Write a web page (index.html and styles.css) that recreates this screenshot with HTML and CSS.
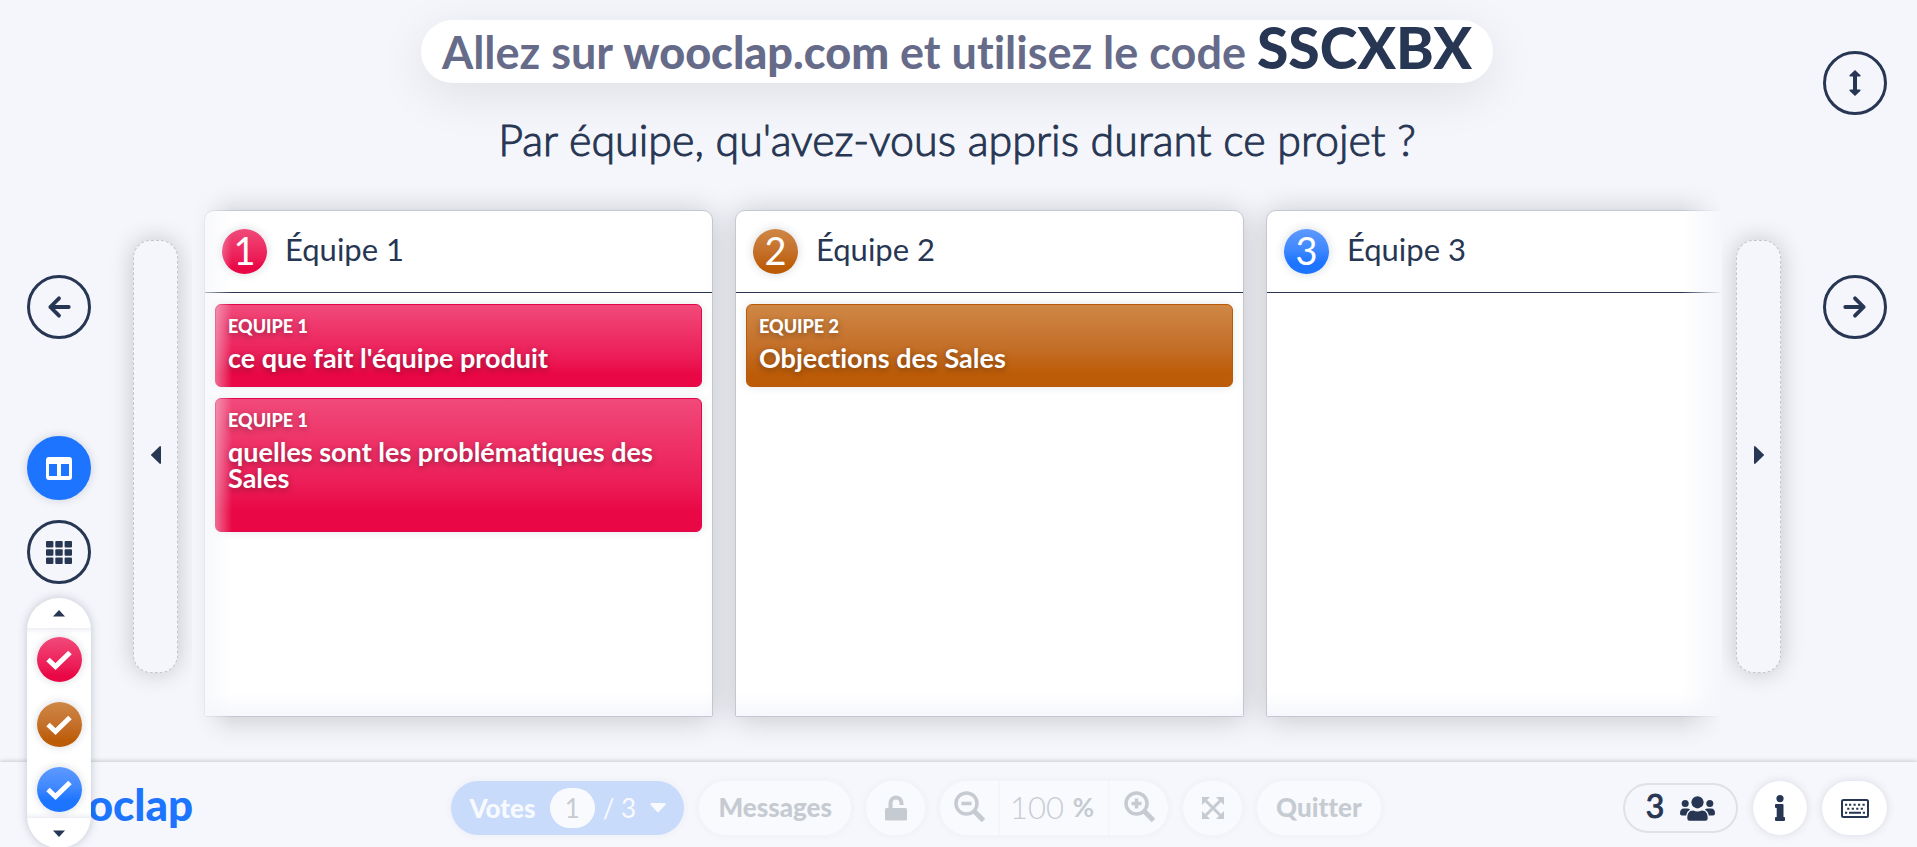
FILE: index.html
```html
<!DOCTYPE html>
<html lang="fr">
<head>
<meta charset="utf-8">
<title>Wooclap</title>
<link rel="stylesheet" href="styles.css">
</head>
<body>
<main class="stage">
  <nav class="rail rail-left">
    <button class="round" aria-label="Question précédente"><svg viewBox="0 0 24 24" class="ico-arrow"><path d="M21 12H4M12 4l-8 8 8 8"/></svg></button>
    <div class="views">
      <button class="round round-active" aria-label="Vue en colonnes"><svg viewBox="0 0 26 23" class="ico-fill ico-view"><path fill-rule="evenodd" d="M3 0h20a3 3 0 0 1 3 3v17a3 3 0 0 1-3 3H3a3 3 0 0 1-3-3V3a3 3 0 0 1 3-3zM3 7v12h8V7zM15 7v12h8V7z"/></svg></button>
      <button class="round" aria-label="Vue en grille"><svg viewBox="0 0 26 23" class="ico-fill ico-view"><rect width="7.400" height="6.600" rx="1"/><rect x="9.300" width="7.400" height="6.600" rx="1"/><rect x="18.600" width="7.400" height="6.600" rx="1"/><rect y="8.200" width="7.400" height="6.600" rx="1"/><rect x="9.300" y="8.200" width="7.400" height="6.600" rx="1"/><rect x="18.600" y="8.200" width="7.400" height="6.600" rx="1"/><rect y="16.400" width="7.400" height="6.600" rx="1"/><rect x="9.300" y="16.400" width="7.400" height="6.600" rx="1"/><rect x="18.600" y="16.400" width="7.400" height="6.600" rx="1"/></svg></button>
    </div>
    <div class="filter">
      <button class="filter-step" aria-label="Monter"><svg viewBox="0 0 12 7" class="ico-caret"><path d="M6 0l6 6.500H0z"/></svg></button>
      <div class="filter-list">
        <label class="check red"><input type="checkbox" checked aria-label="Équipe 1"><svg viewBox="0 0 26 20"><path d="M2 9.500l7.500 7L24 2.500"/></svg></label>
        <label class="check brown"><input type="checkbox" checked aria-label="Équipe 2"><svg viewBox="0 0 26 20"><path d="M2 9.500l7.500 7L24 2.500"/></svg></label>
        <label class="check blue"><input type="checkbox" checked aria-label="Équipe 3"><svg viewBox="0 0 26 20"><path d="M2 9.500l7.500 7L24 2.500"/></svg></label>
      </div>
      <button class="filter-step" aria-label="Descendre"><svg viewBox="0 0 12 7" class="ico-caret"><path d="M6 7l6-6.500H0z"/></svg></button>
    </div>
  </nav>

  <div class="center">
    <p class="join">Allez sur <b>wooclap.com</b> et utilisez le code <strong>SSCXBX</strong></p>
    <h1 class="question">Par équipe, qu'avez-vous appris durant ce projet ?</h1>
    <div class="board-row">
      <button class="scroller" aria-label="Colonnes précédentes"><svg viewBox="0 0 10 18"><path d="M10 1v16a1 1 0 0 1-1 1L.5 9.800a1 1 0 0 1 0-1.600L9 0a1 1 0 0 1 1 1z"/></svg></button>
      <div class="board">
        <section class="column">
          <header class="column-head"><span class="badge red">1</span><h2>Équipe 1</h2></header>
          <div class="column-body">
            <article class="answer red"><h3>EQUIPE 1</h3><p>ce que fait l'équipe produit</p></article>
            <article class="answer answer-tall red"><h3>EQUIPE 1</h3><p>quelles sont les problématiques des Sales</p></article>
          </div>
        </section>
        <section class="column">
          <header class="column-head"><span class="badge brown">2</span><h2>Équipe 2</h2></header>
          <div class="column-body">
            <article class="answer brown"><h3>EQUIPE 2</h3><p>Objections des Sales</p></article>
          </div>
        </section>
        <section class="column">
          <header class="column-head"><span class="badge blue">3</span><h2>Équipe 3</h2></header>
          <div class="column-body"></div>
        </section>
      </div>
      <button class="scroller" aria-label="Colonnes suivantes"><svg viewBox="0 0 10 18"><path d="M0 1v16a1 1 0 0 0 1 1l8.500-8.200a1 1 0 0 0 0-1.600L1 0a1 1 0 0 0-1 1z"/></svg></button>
    </div>
  </div>

  <nav class="rail rail-right">
    <button class="round" aria-label="Ajuster la hauteur"><svg viewBox="0 0 12 26" class="ico-fill ico-height"><path d="M6 0l5.500 5.200q.5 1.300-1 1.300H8v13h2.500q1.500 0 1 1.300L6 26 .5 20.800Q0 19.500 1.500 19.500H4v-13H1.500Q0 6.500.5 5.200z"/></svg></button>
    <button class="round" aria-label="Question suivante"><svg viewBox="0 0 24 24" class="ico-arrow"><path d="M3 12h17M12 4l8 8-8 8"/></svg></button>
  </nav>
</main>

<footer class="footer">
  <a class="logo" href="#">wooclap</a>
  <div class="tools">
    <div class="votes">
      <label for="vote-count">Votes</label>
      <input id="vote-count" type="text" value="1">
      <span>/ 3</span>
      <button aria-label="Options de vote"><svg viewBox="0 0 16 10"><path d="M1.500 0h13q2 .5.800 2L9 8.700q-1 1-2 0L.7 2Q-.5.500 1.500 0z"/></svg></button>
    </div>
    <button class="tool tool-text">Messages</button>
    <button class="tool tool-icon" aria-label="Déverrouiller"><svg viewBox="0 0 22 26" class="ico-lock"><rect y="13" width="22" height="12.500" rx="1.500"/><path d="M5.500 14V8a5.500 5.500 0 0 1 11 0v2"/></svg></button>
    <div class="zoom">
      <button aria-label="Zoom arrière"><svg viewBox="0 0 31 31"><circle cx="12.500" cy="12.500" r="10.500"/><path d="M20 20l9.500 9.500" class="thick"/><path d="M7.500 12.500h10"/></svg></button>
      <label class="zoom-value"><input type="text" value="100" aria-label="Zoom"><b>%</b></label>
      <button aria-label="Zoom avant"><svg viewBox="0 0 31 31"><circle cx="12.500" cy="12.500" r="10.500"/><path d="M20 20l9.500 9.500" class="thick"/><path d="M7.500 12.500h10M12.500 7.500v10"/></svg></button>
    </div>
    <button class="tool tool-icon" aria-label="Plein écran"><svg viewBox="0 0 22 22" class="ico-expand"><path d="M3 3l16 16M19 3L3 19" class="line"/><path d="M0 0h8L0 8zM22 0v8l-8-8zM0 22v-8l8 8zM22 22h-8l8-8z"/></svg></button>
    <button class="tool tool-text">Quitter</button>
  </div>
  <div class="status">
    <button class="people"><span>3</span><svg viewBox="0 0 35 25"><circle cx="17.500" cy="6.300" r="6.100"/><path d="M7.300 22.500c0-5 1.500-8 6-8q4 1.800 8.400 0c4.500 0 6 3 6 8q0 2.300-2.300 2.300H9.600q-2.300 0-2.300-2.300z"/><circle cx="5.200" cy="7.400" r="3.500"/><circle cx="29.800" cy="7.400" r="3.500"/><path d="M0 17.500q0-5 4-5h3q2 0 3.200 1.200-3.500 1.800-4 5.800H2q-2 0-2-2zM35 17.500q0-5-4-5h-3q-2 0-3.200 1.200 3.500 1.800 4 5.800H33q2 0 2-2z"/></svg></button>
    <button class="chip" aria-label="Informations"><svg viewBox="0 0 10 26" class="ico-info"><circle cx="5" cy="3.600" r="3.600"/><path d="M0 10q0-1 1-1h6.500q1 0 1 1v12h.7q.8 0 .8 1v2q0 1-1 1H1q-1 0-1-1v-2q0-1 1-1h.700v-9H1q-1 0-1-1z"/></svg></button>
    <button class="chip chip-wide" aria-label="Raccourcis clavier"><svg viewBox="0 0 28 19" class="ico-keys"><rect x="1" y="1" width="26" height="17" rx="1.500"/><path d="M4 5.700h2.200M8 5.700h2.200M12.500 5.700h2.200M17 5.700h2.200M21.500 5.700h2.200M6.200 9.700h2.200M10.700 9.700h2.200M15.200 9.700h2.200M19.700 9.700h2.200M4 13.700h2.200M8 13.700h12M21.800 13.700H24"/></svg></button>
  </div>
</footer>
</body>
</html>
```

FILE: styles.css
```css
* { box-sizing: border-box; }

:root {
  --ink: #273653;
  --muted: #c6cbd2;
  --bg: #f5f6fb;
  --blue: #1c74ff;
}

body {
  margin: 0;
  height: 100vh;
  display: flex;
  flex-direction: column;
  overflow: hidden;
  background: var(--bg);
  color: var(--ink);
  font-family: Lato, "Open Sans", sans-serif;
  font-variant-ligatures: none;
}

h1, h2, h3, p { margin: 0; font-weight: 400; }

button, input { font: inherit; color: inherit; }

button {
  display: flex;
  align-items: center;
  justify-content: center;
  padding: 0;
  border: 0;
  background: none;
  font-variant-ligatures: none;
  cursor: pointer;
}

svg { display: block; flex: none; fill: currentColor; }

.red { background: linear-gradient(#f14a7a, #ec1c57 65%, #e90845 85%); border-color: #e2064a; }
.brown { background: linear-gradient(#cf8745, #c4702a 50%, #bd5c08 85%); border-color: #b95a08; }
.blue { background: linear-gradient(#5e99ff, #4088ff 45%, var(--blue) 75%); }

/* Stage */
.stage {
  flex: 1;
  min-height: 0;
  display: flex;
  gap: 42px;
  padding: 0 30px 0 27px;
}

.rail { flex: none; width: 64px; display: flex; flex-direction: column; }
.rail-left { position: relative; z-index: 3; padding-top: 275px; }
.rail-right { padding-top: 51px; gap: 160px; }

.views { display: flex; flex-direction: column; gap: 20px; margin: 97px 0 14px; }

.round {
  flex: none;
  width: 64px;
  height: 64px;
  border: 3px solid var(--ink);
  border-radius: 50%;
}

.round-active {
  background: var(--blue);
  border-color: var(--blue);
  color: #fff;
  box-shadow: 0 0 10px rgba(39, 54, 83, .2);
}

.ico-arrow {
  width: 26px;
  height: 26px;
  fill: none;
  stroke: currentColor;
  stroke-width: 3.500;
  stroke-linecap: round;
  stroke-linejoin: round;
}
.ico-view { width: 26px; height: 23px; }
.ico-height { width: 12px; height: 26px; }
.ico-caret { width: 12px; height: 7px; }

.filter {
  flex: none;
  border-radius: 32px;
  background: #fff;
  box-shadow: 0 0 10px rgba(39, 54, 83, .25);
}
.filter-step { width: 100%; height: 30px; }
.filter-list {
  display: flex;
  flex-direction: column;
  align-items: center;
  gap: 20px;
  padding: 8px 0 5px;
  border: solid #eeeff4;
  border-width: 1px 0;
  box-shadow: inset 0 4px 4px -2px #f0f1f6, inset 0 -4px 4px -2px #f0f1f6;
}
.check {
  display: grid;
  place-items: center;
  width: 45px;
  height: 45px;
  border-radius: 50%;
  box-shadow: 0 0 8px rgba(39, 54, 83, .2);
}
.check input, .check svg { grid-area: 1 / 1; }
.check input { appearance: none; margin: 0; width: 45px; height: 45px; }
.check svg { width: 26px; height: 20px; fill: none; stroke: #fff; stroke-width: 5; pointer-events: none; overflow: visible; }

/* Heading */
.center {
  flex: 1;
  min-width: 0;
  display: flex;
  flex-direction: column;
  align-items: center;
  padding-top: 20px;
}

.join {
  height: 63px;
  padding: 2px 21px 0;
  border-radius: 32px;
  background: #fff;
  box-shadow: 0 12px 50px rgba(0, 0, 0, .09);
  color: #666b8a;
  font-size: 45px;
  font-weight: 700;
  line-height: 60px;
  white-space: nowrap;
}
.join b { font-weight: 900; }
.join strong { color: var(--ink); font-size: 57px; font-weight: 900; line-height: 50px; }

.question {
  padding-top: 32px;
  height: 97px;
  font-size: 43px;
  font-weight: 300;
  line-height: 50px;
  white-space: nowrap;
  -webkit-text-stroke: 1px currentColor;
}

/* Board */
.board-row { flex: 1; min-height: 0; align-self: stretch; display: flex; gap: 14px; }

.scroller {
  flex: none;
  width: 45px;
  margin: 60px 0 89px;
  padding-bottom: 4px;
  border: 1px dashed #c4c6cc;
  border-radius: 18px;
  background: var(--bg);
  box-shadow: 0 0 24px rgba(0, 0, 0, .2);
}
.scroller svg { width: 10px; height: 18px; }

.board {
  position: relative;
  z-index: 1;
  flex: 1;
  min-width: 0;
  display: flex;
  gap: 22px;
  padding: 30px 0 45px 12px;
  overflow: hidden;
  background: var(--bg);
}
.board::before, .board::after {
  content: "";
  position: absolute;
  z-index: 1;
  top: 0;
  bottom: 0;
  width: 40px;
  pointer-events: none;
}
.board::before { left: 0; background: linear-gradient(to right, var(--bg), rgba(245, 246, 251, 0)); }
.board::after { right: 0; background: linear-gradient(to left, var(--bg), rgba(245, 246, 251, 0)); }

.column {
  flex: 0 0 calc(100% / 3 + 3px);
  display: flex;
  flex-direction: column;
  border: 1px solid #c3c8d2;
  border-radius: 10px 10px 2px 2px;
  background: #fff;
  box-shadow: 0 2px 30px rgba(0, 0, 0, .2);
}
.column-head {
  display: flex;
  align-items: center;
  gap: 18px;
  height: 82px;
  padding: 0 17px;
  border-bottom: 1px solid var(--ink);
}
.column-head h2 { padding-bottom: 5px; font-size: 31px; line-height: 36px; }
.badge {
  flex: none;
  width: 45px;
  height: 45px;
  border-radius: 50%;
  box-shadow: 0 0 10px rgba(39, 54, 83, .2);
  color: #fff;
  font-size: 38px;
  line-height: 43px;
  text-align: center;
}
.column-body {
  flex: 1;
  display: flex;
  flex-direction: column;
  gap: 11px;
  padding: 11px 10px;
  background: linear-gradient(to top, #f6f7fc, #fff 24px);
}

.answer {
  height: 83px;
  padding: 9px 12px;
  border-width: 1px;
  border-style: solid;
  border-radius: 6px;
  box-shadow: 0 0 10px rgba(39, 54, 83, .12);
  color: #fff;
  text-shadow: 0 2px 6px rgba(0, 0, 0, .35);
}
.answer-tall { height: 134px; }
.answer h3 { font-size: 18px; font-weight: 900; line-height: 24px; }
.answer p { padding-top: 7px; font-size: 27px; font-weight: 700; line-height: 26px; }

/* Footer */
.footer {
  flex: none;
  display: flex;
  justify-content: space-between;
  align-items: center;
  height: 85px;
  padding: 7px 30px 0 27px;
  position: relative;
  z-index: 2;
  background: #f6f7fc;
  box-shadow: 0 -1px 4px rgba(0, 0, 0, .18);
}

.logo {
  margin-right: 16px;
  padding-bottom: 8px;
  color: var(--blue);
  font-size: 44px;
  font-weight: 900;
  line-height: 48px;
  text-decoration: none;
}

.tools { display: flex; gap: 15px; color: var(--muted); font-size: 26px; }

.tool, .zoom, .votes {
  height: 54px;
  border-radius: 27px;
  background: #f9fafe;
  box-shadow: 0 0 8px rgba(39, 54, 83, .05);
}
.tool-text { padding: 0 19px 2px; font-weight: 900; }
.tool-icon { width: 59px; }
.ico-lock { width: 22px; height: 26px; }
.ico-lock path { fill: none; stroke: currentColor; stroke-width: 4; }
.ico-expand { width: 22px; height: 22px; }
.ico-expand .line { stroke: currentColor; stroke-width: 3; }

.votes {
  display: flex;
  align-items: center;
  width: 233px;
  padding: 0 18px;
  background: #c8dbfb;
  color: #f9fafe;
}
.votes label { font-weight: 900; }
.votes input {
  width: 45px;
  height: 40px;
  margin: 0 8px 0 auto;
  padding: 0;
  border: 0;
  border-radius: 20px;
  background: #f9fafe;
  color: var(--muted);
  text-align: center;
}
.votes button { margin-left: auto; }
.votes button svg { width: 16px; height: 10px; }

.zoom { display: flex; width: 228px; }
.zoom button { width: 58px; padding-bottom: 3px; }
.zoom svg { width: 31px; height: 31px; fill: none; stroke: currentColor; stroke-width: 3.500; }
.zoom .thick { stroke-width: 5; }
.zoom-value {
  flex: 1;
  display: flex;
  align-items: center;
  justify-content: space-between;
  padding: 0 14px 2px 10px;
  border: solid #f5f6fa;
  border-width: 0 2px;
}
.zoom-value input {
  width: 56px;
  padding: 0;
  border: 0;
  background: none;
  font-size: 31px;
  font-weight: 300;
}

.status { display: flex; align-items: center; gap: 15px; }
.people {
  gap: 16px;
  width: 115px;
  height: 50px;
  border: 2px solid #dfe1e6;
  border-radius: 25px;
  font-size: 32px;
}
.people span { padding-bottom: 5px; -webkit-text-stroke: 1px currentColor; }
.people svg { width: 35px; height: 25px; }
.chip {
  width: 54px;
  height: 54px;
  border-radius: 27px;
  background: #fff;
  box-shadow: 0 0 8px rgba(39, 54, 83, .15);
}
.chip-wide { width: 65px; }
.ico-info { width: 10px; height: 26px; }
.ico-keys { width: 28px; height: 19px; fill: none; stroke: currentColor; stroke-width: 2; }
```
